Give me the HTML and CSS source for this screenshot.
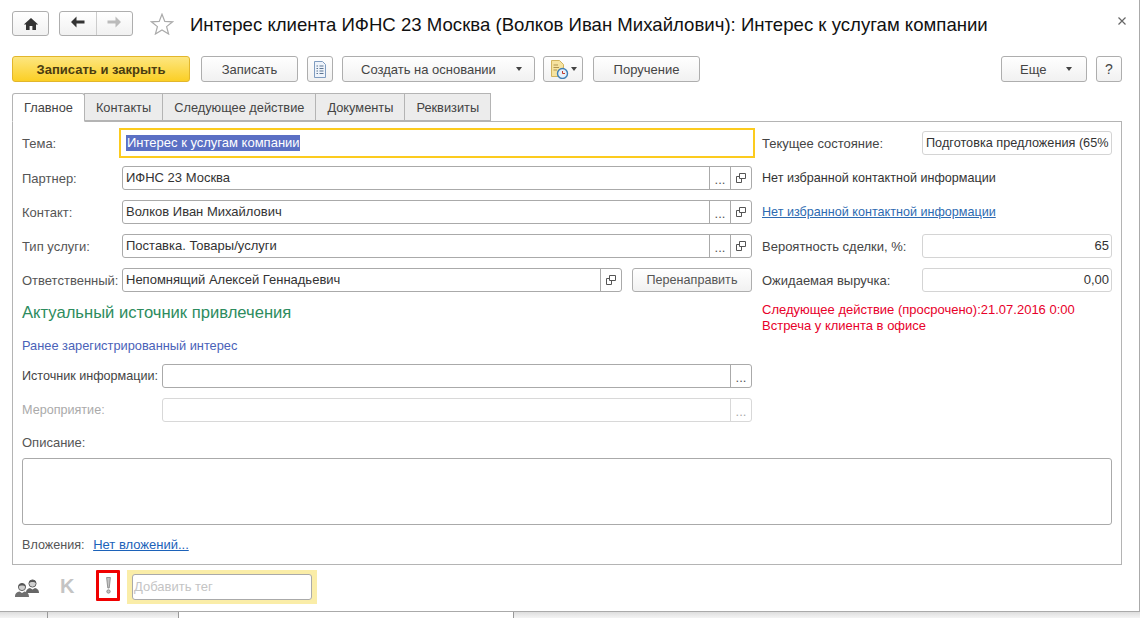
FILE: index.html
```html
<!DOCTYPE html>
<html lang="ru">
<head>
  <meta charset="UTF-8">
  <meta name="viewport" content="width=device-width, initial-scale=1.0">
  <title>Интерес клиента</title>
  <link rel="stylesheet" href="styles.css">
</head>
<body>
  <div class="window">
    <!-- Title row -->
    <div class="titlebar">
      <button class="btn nav-home">
        <svg width="16" height="14" viewBox="0 0 16 14"><path d="M8 1 L0.8 7.6 H3 V13 H6.6 V9 H9.4 V13 H13 V7.6 H15.2 Z" fill="#333"/></svg>
      </button>
      <div class="nav-pair">
        <button class="nav-arrow">
          <svg width="15" height="12" viewBox="0 0 15 12"><path d="M6.5 0.5 L1 6 L6.5 11.5 V7.5 H14.5 V4.5 H6.5 Z" fill="#333"/></svg>
        </button>
        <button class="nav-arrow">
          <svg width="15" height="12" viewBox="0 0 15 12"><path d="M8.5 0.5 L14 6 L8.5 11.5 V7.5 H0.5 V4.5 H8.5 Z" fill="#bbb"/></svg>
        </button>
      </div>
      <svg class="star" width="24" height="22" viewBox="0 0 24 22"><path d="M12 1.2 L14.8 8.4 L22.6 8.8 L16.6 13.6 L18.6 21 L12 16.9 L5.4 21 L7.4 13.6 L1.4 8.8 L9.2 8.4 Z" fill="none" stroke="#aaa" stroke-width="1.2"/></svg>
      <h1 class="title">Интерес клиента ИФНС 23 Москва (Волков Иван Михайлович): Интерес к услугам компании</h1>
      <svg class="close" width="8" height="8" viewBox="0 0 8 8"><path d="M0.5 0.5 L7.5 7.5 M7.5 0.5 L0.5 7.5" stroke="#666" stroke-width="1.2"/></svg>
    </div>

    <!-- Command bar -->
    <div class="toolbar">
      <button class="btn btn-primary">Записать и закрыть</button>
      <button class="btn btn-save">Записать</button>
      <button class="btn btn-icon">
        <svg width="14" height="17" viewBox="0 0 14 17"><path d="M1.5 0.5 H9.5 L12.5 3.5 V16.5 H1.5 Z" fill="#eef3fa" stroke="#7f9cc0"/><path d="M3.5 5 H5 M6.5 5 H10.5 M3.5 7.5 H5 M6.5 7.5 H10.5 M3.5 10 H5 M6.5 10 H10.5 M3.5 12.5 H5 M6.5 12.5 H10.5" stroke="#5b7492"/></svg>
      </button>
      <button class="btn btn-create">Создать на основании<span class="caret"></span></button>
      <button class="btn btn-report">
        <svg width="21" height="19" viewBox="0 0 21 19"><path d="M1.5 0.5 H9.5 L13.5 4.5 V16.5 H1.5 Z" fill="#f6e3a0" stroke="#d2b45e"/><path d="M3.5 5 H8 M3.5 7.5 H9 M3.5 10 H7" stroke="#b09550"/><circle cx="12.5" cy="13.5" r="5" fill="#e6f0f9" stroke="#3f7fb5" stroke-width="1.4"/><path d="M12.5 11 V13.5 H15" stroke="#c0392b" fill="none"/></svg>
        <span class="caret caret-tight"></span>
      </button>
      <button class="btn btn-task">Поручение</button>
      <button class="btn btn-more">Еще<span class="caret"></span></button>
      <button class="btn btn-help">?</button>
    </div>

    <!-- Tabs -->
    <div class="tabs">
      <div class="tab active">Главное</div>
      <div class="tab">Контакты</div>
      <div class="tab">Следующее действие</div>
      <div class="tab">Документы</div>
      <div class="tab">Реквизиты</div>
    </div>

    <!-- Form -->
    <div class="panel">
      <div class="columns">
        <div class="col-left">
          <div class="row">
            <label class="lbl">Тема:</label>
            <div class="field field-focus"><span class="selected">Интерес к услугам компании</span></div>
          </div>
          <div class="row">
            <label class="lbl">Партнер:</label>
            <div class="field">
              <span class="value">ИФНС 23 Москва</span>
              <span class="cell cell-dots">...</span>
              <span class="cell"><svg width="10" height="10" viewBox="0 0 10 10"><path d="M3.5 0.5 H9.5 V5.5 H3.5 Z M3.5 3.5 H0.5 V9.5 H5.5 V5.5" fill="none" stroke="#555"/></svg></span>
            </div>
          </div>
          <div class="row">
            <label class="lbl">Контакт:</label>
            <div class="field">
              <span class="value">Волков Иван Михайлович</span>
              <span class="cell cell-dots">...</span>
              <span class="cell"><svg width="10" height="10" viewBox="0 0 10 10"><path d="M3.5 0.5 H9.5 V5.5 H3.5 Z M3.5 3.5 H0.5 V9.5 H5.5 V5.5" fill="none" stroke="#555"/></svg></span>
            </div>
          </div>
          <div class="row">
            <label class="lbl">Тип услуги:</label>
            <div class="field">
              <span class="value">Поставка. Товары/услуги</span>
              <span class="cell cell-dots">...</span>
              <span class="cell"><svg width="10" height="10" viewBox="0 0 10 10"><path d="M3.5 0.5 H9.5 V5.5 H3.5 Z M3.5 3.5 H0.5 V9.5 H5.5 V5.5" fill="none" stroke="#555"/></svg></span>
            </div>
          </div>
          <div class="row">
            <label class="lbl">Ответственный:</label>
            <div class="field">
              <span class="value">Непомнящий Алексей Геннадьевич</span>
              <span class="cell"><svg width="10" height="10" viewBox="0 0 10 10"><path d="M3.5 0.5 H9.5 V5.5 H3.5 Z M3.5 3.5 H0.5 V9.5 H5.5 V5.5" fill="none" stroke="#555"/></svg></span>
            </div>
            <button class="btn btn-forward">Перенаправить</button>
          </div>

          <h2 class="section">Актуальный источник привлечения</h2>
          <a class="prior" href="#">Ранее зарегистрированный интерес</a>

          <div class="row row-source">
            <label class="lbl lbl-wide lbl-dark">Источник информации:</label>
            <div class="field">
              <span class="value"></span>
              <span class="cell cell-dots">...</span>
            </div>
          </div>
          <div class="row row-event">
            <label class="lbl lbl-wide lbl-off">Мероприятие:</label>
            <div class="field field-off">
              <span class="value"></span>
              <span class="cell cell-dots">...</span>
            </div>
          </div>
        </div>

        <div class="col-right">
          <div class="row">
            <label class="lbl lbl-right">Текущее состояние:</label>
            <div class="field field-clip"><span class="value value-state">Подготовка предложения (65%</span></div>
          </div>
          <div class="row"><span class="plain">Нет избранной контактной информации</span></div>
          <div class="row"><a class="link-blue" href="#">Нет избранной контактной информации</a></div>
          <div class="row">
            <label class="lbl lbl-right">Вероятность сделки, %:</label>
            <div class="field field-clip"><span class="value value-num">65</span></div>
          </div>
          <div class="row">
            <label class="lbl lbl-right">Ожидаемая выручка:</label>
            <div class="field field-clip"><span class="value value-num">0,00</span></div>
          </div>
          <div class="overdue">
            Следующее действие (просрочено):21.07.2016 0:00<br>
            Встреча у клиента в офисе
          </div>
        </div>
      </div>

      <div class="desc-label">Описание:</div>
      <div class="desc-box"></div>
      <div class="attach">
        <span class="lbl-attach">Вложения:</span>
        <a class="link-attach" href="#">Нет вложений...</a>
      </div>
    </div>

    <!-- Bottom strip -->
    <div class="footer">
      <svg class="people" width="24" height="20" viewBox="0 0 24 20">
        <path d="M11 16 C11 12.5 13 11.5 15 11 L17.5 12.5 L20 11 C22 11.5 24 12.5 24 16 Z" fill="#666"/>
        <circle cx="17.5" cy="6.5" r="3.6" fill="#d0d0d0" stroke="#666"/>
        <path d="M14 6 C14 2 21 2 21 6 C19.5 4.5 15.5 4.5 14 6 Z" fill="#555"/>
        <path d="M0 20 C0 16 2 15 4.5 14.5 L7 16 L9.5 14.5 C12 15 14 16 14 20 Z" fill="#707070"/>
        <circle cx="7" cy="10" r="3.6" fill="#d0d0d0" stroke="#666"/>
        <path d="M3.5 9.5 C3.5 5.5 10.5 5.5 10.5 9.5 C9 8 5 8 3.5 9.5 Z" fill="#555"/>
      </svg>
      <span class="k-mark">K</span>
      <div class="alert">
        <svg width="5" height="17" viewBox="0 0 5 17"><path d="M0.6 0.5 H4.4 L3.2 11 H1.8 Z" fill="#c4c4c4" stroke="#808080" stroke-width="0.8"/><circle cx="2.5" cy="14.5" r="1.7" fill="#c4c4c4" stroke="#808080" stroke-width="0.8"/></svg>
      </div>
      <div class="tag-wrap"><div class="tag-input">Добавить тег</div></div>
    </div>
  </div>
  <div class="bottom-strip">
    <span class="strip-tab strip-first"></span>
    <span class="strip-tab strip-second"></span>
    <span class="strip-tab strip-active"></span>
  </div>
</body>
</html>
```

FILE: styles.css
```css
html, body {
  margin: 0;
  padding: 0;
}

body {
  width: 1140px;
  height: 618px;
  overflow: hidden;
  background-color: #fff;
  font-family: "Liberation Sans", Arial, sans-serif;
  font-size: 13px;
  color: #333;
}

.window {
  box-sizing: border-box;
  width: 1140px;
  height: 612px;
  border-right: 1px solid #aaa;
  border-bottom: 1px solid #aaa;
  padding: 11px 0 0 12px;
  overflow: hidden;
}

/* Title row */
.titlebar {
  display: flex;
  align-items: center;
  height: 25px;
}

.btn {
  box-sizing: border-box;
  display: inline-flex;
  align-items: center;
  justify-content: center;
  height: 26px;
  padding: 0;
  border: 1px solid #aeaeae;
  border-radius: 3px;
  background: linear-gradient(#fff, #f1f1f1);
  font-family: inherit;
  font-size: 13px;
  color: #444;
}

.nav-home {
  width: 37px;
  height: 25px;
}

.nav-pair {
  box-sizing: border-box;
  display: flex;
  width: 74px;
  height: 25px;
  margin-left: 10px;
  border: 1px solid #aeaeae;
  border-radius: 3px;
  background: linear-gradient(#fff, #f1f1f1);
}

.nav-arrow {
  flex: 1;
  padding: 0;
  border: none;
  background: none;
}

.nav-arrow + .nav-arrow {
  border-left: 1px solid #ccc;
}

.star {
  margin-left: 17px;
}

.title {
  margin: 0 0 0 16px;
  padding-top: 3px;
  font-size: 18.6px;
  font-weight: normal;
  color: #111;
  white-space: nowrap;
}

.close {
  margin-left: auto;
  margin-right: 13px;
  margin-top: -6px;
}

/* Command bar */
.toolbar {
  display: flex;
  margin-top: 20px;
  height: 26px;
}

.btn-primary {
  width: 178px;
  border-color: #e2b62c;
  background: linear-gradient(#fde680, #fbcf25);
  font-weight: bold;
  color: #4a3c10;
}

.btn-save { width: 97px; margin-left: 11px; }
.btn-icon { width: 26px; margin-left: 9px; }
.btn-create { width: 193px; margin-left: 9px; padding-left: 18px; justify-content: flex-start; }
.btn-report { width: 40px; margin-left: 8px; }
.btn-task { width: 107px; margin-left: 10px; }
.btn-more { width: 86px; margin-left: auto; padding-left: 18px; justify-content: flex-start; }
.btn-help { width: 26px; margin-left: 9px; margin-right: 17px; font-size: 14px; }

.caret {
  width: 0;
  height: 0;
  margin-left: 20px;
  border-left: 3.5px solid transparent;
  border-right: 3.5px solid transparent;
  border-top: 4px solid #444;
}

.caret-tight {
  margin-left: 0;
}

/* Tabs */
.tabs {
  display: flex;
  margin-top: 11px;
  height: 28px;
  position: relative;
  z-index: 1;
}

.tab {
  box-sizing: border-box;
  height: 28px;
  padding: 6px 11px 0;
  margin-left: -1px;
  border: 1px solid #b4b4b4;
  background-color: #ececec;
  font-size: 12.8px;
  color: #444;
  white-space: nowrap;
}

.tab:first-child {
  margin-left: 0;
}

.tab.active {
  height: 29px;
  border-bottom-color: #fff;
  border-radius: 3px 3px 0 0;
  background-color: #fff;
}

/* Form panel */
.panel {
  box-sizing: border-box;
  width: 1110px;
  height: 444px;
  padding: 6px 0 0 9px;
  border: 1px solid #b4b4b4;
  background-color: #fff;
}

.columns {
  display: flex;
}

.col-left {
  width: 730px;
}

.col-right {
  width: 350px;
  margin-left: 10px;
}

.row {
  display: flex;
  align-items: center;
  height: 24px;
  margin-bottom: 10px;
}

.row:first-child {
  height: 30px;
  margin-bottom: 8px;
}

.lbl {
  flex: none;
  width: 100px;
  color: #555;
}

.lbl-wide {
  width: 140px;
  font-size: 12.6px;
}

.lbl-dark {
  color: #444;
}

.lbl-right {
  width: 160px;
  color: #444;
}

.lbl-off {
  color: #aaa;
}

.field {
  box-sizing: border-box;
  display: flex;
  flex: 1;
  align-items: stretch;
  height: 24px;
  border: 1px solid #aaa;
  border-radius: 3px;
  background-color: #fff;
  overflow: hidden;
}

.field-focus {
  align-items: center;
  height: 30px;
  margin: 0 -3px;
  padding-left: 5px;
  border: 2px solid #fccb1e;
  border-radius: 0;
}

.selected {
  padding-left: 1px;
  background-color: #5b70c4;
  color: #fff;
  line-height: 16px;
}

.value {
  flex: 1;
  padding-left: 3px;
  line-height: 22px;
  color: #333;
  white-space: nowrap;
  overflow: hidden;
}

.value-state {
  font-size: 12.7px;
}

.cell {
  flex: none;
  display: flex;
  align-items: center;
  justify-content: center;
  width: 20px;
  border-left: 1px solid #aaa;
}

.cell-dots {
  align-items: flex-end;
  line-height: 18px;
  color: #555;
}

.btn-forward {
  flex: none;
  width: 120px;
  height: 24px;
  margin-left: 10px;
  font-size: 12.6px;
  color: #555;
}

.section {
  margin: 11px 0 0;
  font-size: 16.6px;
  font-weight: normal;
  line-height: 20px;
  color: #2d8c5e;
}

.prior {
  display: block;
  margin-top: 15px;
  font-size: 12.8px;
  line-height: 16px;
  color: #4a62b8;
  text-decoration: none;
}

.row-source {
  margin-top: 10px;
}

.field-off {
  border-color: #d8d8d8;
}

.field-off .cell {
  border-left-color: #d8d8d8;
  color: #aaa;
}

/* Right column */
.field-clip {
  border-color: #d4d4d4;
}

.value-num {
  padding-right: 2px;
  text-align: right;
}

.plain {
  font-size: 12.6px;
  color: #333;
}

.link-blue {
  font-size: 12.6px;
  color: #2d6ab1;
}

.overdue {
  margin-top: 0;
  line-height: 16px;
  color: #e8002a;
}

.desc-label {
  margin-top: 3px;
  line-height: 16px;
  color: #555;
}

.desc-box {
  box-sizing: border-box;
  width: 1090px;
  height: 67px;
  margin-top: 7px;
  border: 1px solid #aaa;
  border-radius: 3px;
}

.attach {
  margin-top: 12px;
  line-height: 16px;
}

.lbl-attach {
  font-size: 12.6px;
  color: #555;
}

.link-attach {
  margin-left: 5px;
  color: #1c62b9;
}

/* Footer icons */
.footer {
  display: flex;
  align-items: flex-start;
  height: 36px;
  margin-top: 5px;
}

.people {
  margin-left: 3px;
  margin-top: 7px;
}

.k-mark {
  width: 20px;
  margin-left: 21px;
  margin-top: 5px;
  font-size: 20px;
  font-weight: bold;
  color: #c4c4c4;
}

.alert {
  box-sizing: border-box;
  display: flex;
  align-items: center;
  justify-content: center;
  width: 24px;
  height: 31px;
  margin-left: 16px;
  border: 3px solid #f00000;
  border-radius: 1px;
}

.tag-wrap {
  box-sizing: border-box;
  width: 190px;
  height: 34px;
  margin-left: 7px;
  padding: 4px 5px;
  background-color: #faeda8;
}

.tag-input {
  box-sizing: border-box;
  height: 26px;
  padding-left: 1px;
  border: 1px solid #aaa;
  border-radius: 3px;
  background-color: #fff;
  line-height: 24px;
  color: #c4c4c4;
}

/* Strip under the window */
.bottom-strip {
  display: flex;
  height: 6px;
  background: linear-gradient(#dedede, #f4f4f4);
}

.strip-tab {
  box-sizing: border-box;
  border-right: 1px solid #999;
}

.strip-first { width: 48px; }
.strip-second { width: 131px; }
.strip-active { width: 335px; background-color: #fff; }
```
